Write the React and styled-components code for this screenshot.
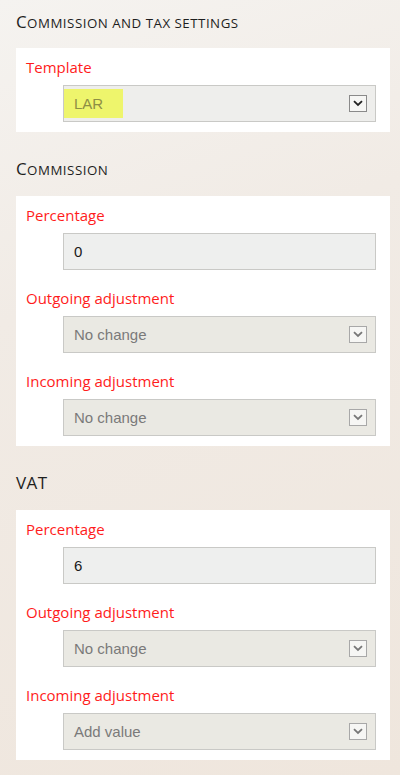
import React from "react";
import styled, { createGlobalStyle } from "styled-components";

const Global = createGlobalStyle`
  html, body { margin: 0; padding: 0; }
  body {
    width: 400px;
    min-height: 775px;
    background: linear-gradient(160deg, #f5f3f0 0%, #f1ebe5 35%, #efe6dd 100%);
    font-family: "Open Sans", "Noto Sans", sans-serif;
  }
`;

const Page = styled.div`
  padding: 11px 10px 15px 16px;
  display: flex;
  flex-direction: column;
`;

const Heading = styled.h2`
  margin: ${(p) => (p.$first ? "0" : "26px")} 0 ${(p) => (p.$first ? "15px" : "16px")} 0;
  height: 22px;
  font-size: 17px;
  line-height: 22px;
  font-weight: 400;
  color: #1e1e1e;
  letter-spacing: 0.4px;
  white-space: nowrap;
`;

const Small = styled.span`
  font-size: 13.3px;
  line-height: 1;
  text-transform: uppercase;
  letter-spacing: 0.5px;
`;

const SmallCaps = ({ text }) => (
  <>
    {text[0].toUpperCase()}
    <Small>{text.slice(1)}</Small>
  </>
);

const Card = styled.div`
  background: #ffffff;
  padding: 9px 14px 10px 10px;
  display: flex;
  flex-direction: column;
  gap: 18px;
`;

const Field = styled.div`
  display: flex;
  flex-direction: column;
`;

const Label = styled.div`
  font-size: 15px;
  line-height: 20px;
  color: #ff1c1c;
  margin-bottom: 8px;
`;

const Control = styled.div`
  margin-left: 37px;
  height: 37px;
  box-sizing: border-box;
  border: 1px solid #c9c9c6;
  background: ${(p) => (p.$kind === "input" ? "#eeefee" : p.$kind === "template" ? "#eeeeec" : "#eae9e3")};
  display: flex;
  align-items: center;
  padding: 0 8px 0 10px;
  font-family: "Liberation Sans", Arial, sans-serif;
  font-size: 15px;
  color: ${(p) => (p.$kind === "input" ? "#1a1a1a" : "#7a7a7a")};
`;

const Value = styled.span`
  flex: 1;
`;

const Highlight = styled.span`
  display: inline-flex;
  align-items: center;
  height: 29px;
  margin-left: -10px;
  padding: 0 20px 0 10px;
  background: #eef56c;
  color: #8e8f45;
`;

const Spacer = styled.span`
  flex: 1;
`;

const ArrowBox = styled.span`
  width: 18px;
  height: 17px;
  box-sizing: border-box;
  border: 1px solid ${(p) => (p.$dark ? "#8a8a8a" : "#a8a8a8")};
  background: #f6f6f4;
  display: flex;
  align-items: center;
  justify-content: center;
`;

const Chevron = ({ dark }) => (
  <svg width="10" height="7" viewBox="0 0 10 7">
    <path
      d="M1 1.2 L5 5 L9 1.2"
      fill="none"
      stroke={dark ? "#222" : "#777"}
      strokeWidth="1.8"
    />
  </svg>
);

const Select = ({ value, template }) => (
  <Control $kind={template ? "template" : "select"}>
    {template ? (
      <>
        <Highlight>{value}</Highlight>
        <Spacer />
      </>
    ) : (
      <Value>{value}</Value>
    )}
    <ArrowBox $dark={template}>
      <Chevron dark={template} />
    </ArrowBox>
  </Control>
);

const Input = ({ value }) => (
  <Control $kind="input">
    <Value>{value}</Value>
  </Control>
);

export default function App() {
  return (
    <>
      <Global />
      <Page>
        <Heading $first>
          <SmallCaps text="Commission and tax settings" />
        </Heading>
        <Card>
          <Field>
            <Label>Template</Label>
            <Select value="LAR" template />
          </Field>
        </Card>

        <Heading>
          <SmallCaps text="Commission" />
        </Heading>
        <Card>
          <Field>
            <Label>Percentage</Label>
            <Input value="0" />
          </Field>
          <Field>
            <Label>Outgoing adjustment</Label>
            <Select value="No change" />
          </Field>
          <Field>
            <Label>Incoming adjustment</Label>
            <Select value="No change" />
          </Field>
        </Card>

        <Heading>VAT</Heading>
        <Card>
          <Field>
            <Label>Percentage</Label>
            <Input value="6" />
          </Field>
          <Field>
            <Label>Outgoing adjustment</Label>
            <Select value="No change" />
          </Field>
          <Field>
            <Label>Incoming adjustment</Label>
            <Select value="Add value" />
          </Field>
        </Card>
      </Page>
    </>
  );
}
